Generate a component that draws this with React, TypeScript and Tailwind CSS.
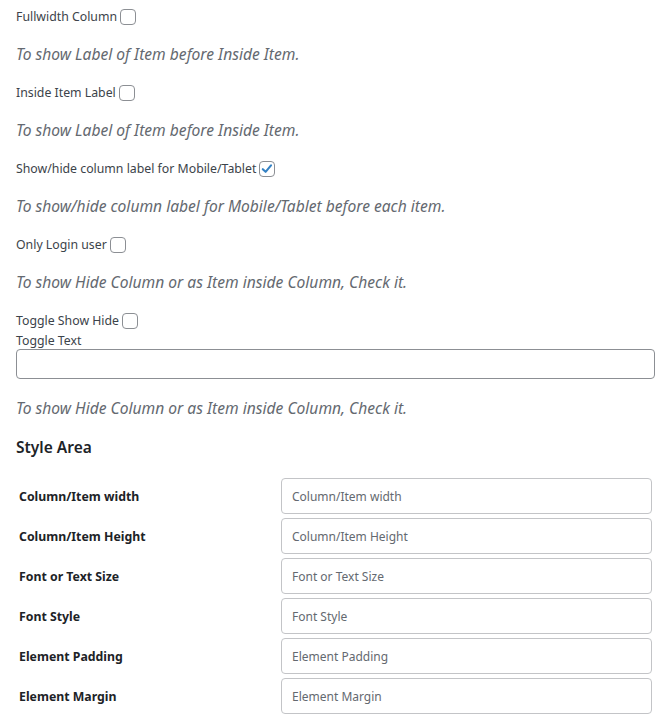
import React from "react";

const font = { fontFamily: '"Noto Sans", "Open Sans", sans-serif' };

function Checkbox({ checked }: { checked?: boolean }) {
  return (
    <span className="ml-[3px] inline-flex h-4 w-4 items-center justify-center rounded-[4px] border border-[#8c8f94] bg-white">
      {checked && (
        <svg viewBox="0 0 16 16" className="h-[14px] w-[14px]">
          <path d="M3.2 8.2 L6.4 11.2 L12.6 3.8" fill="none" stroke="#3582c4" strokeWidth="2.4" strokeLinecap="round" strokeLinejoin="round" />
        </svg>
      )}
    </span>
  );
}

function Option({ label, desc, checked }: { label: string; desc: string; checked?: boolean }) {
  return (
    <div>
      <div className="flex h-5 items-center text-[12.3px] text-[#3c434a]">
        {label}
        <Checkbox checked={checked} />
      </div>
      <p className="mt-[15px] mb-[17px] h-6 text-[15.6px] leading-6 italic text-[#646970]">{desc}</p>
    </div>
  );
}

const styleRows = [
  "Column/Item width",
  "Column/Item Height",
  "Font or Text Size",
  "Font Style",
  "Element Padding",
  "Element Margin",
];

export default function App() {
  return (
    <div className="min-h-[721px] w-[669px] bg-white px-4 pt-[7px]" style={font}>
      <Option label="Fullwidth Column" desc="To show Label of Item before Inside Item." />
      <Option label="Inside Item Label" desc="To show Label of Item before Inside Item." />
      <Option
        label="Show/hide column label for Mobile/Tablet"
        desc="To show/hide column label for Mobile/Tablet before each item."
        checked
      />
      <Option label="Only Login user" desc="To show Hide Column or as Item inside Column, Check it." />

      {/* Toggle */}
      <div className="flex h-5 items-center text-[12.3px] text-[#3c434a]">
        Toggle Show Hide
        <Checkbox />
      </div>
      <div className="h-[18px] text-[12.3px] leading-5 text-[#3c434a]">Toggle Text</div>
      <input
        type="text"
        className="block h-[30px] w-[639px] rounded-[4px] border border-[#8c8f94] bg-white px-2 text-[14px]"
      />
      <p className="mt-[17px] h-6 text-[15.6px] leading-6 italic text-[#646970]">
        To show Hide Column or as Item inside Column, Check it.
      </p>

      <h3 className="mt-4 h-[22px] text-[15.5px] leading-[22px] font-semibold text-[#1d2327]">Style Area</h3>

      <div className="mt-5 flex flex-col gap-1">
        {styleRows.map((r) => (
          <div key={r} className="flex h-9 items-center">
            <div className="w-[265px] pl-[3px] pt-[2px] text-[12.3px] font-bold text-[#1d2327]">{r}</div>
            <input
              type="text"
              placeholder={r}
              className="h-9 w-[371px] rounded-[4px] border border-[#c3c4c7] bg-white px-[10px] pt-[1px] text-[12px] text-[#2c3338] placeholder:text-[#646970]"
            />
          </div>
        ))}
      </div>
    </div>
  );
}
